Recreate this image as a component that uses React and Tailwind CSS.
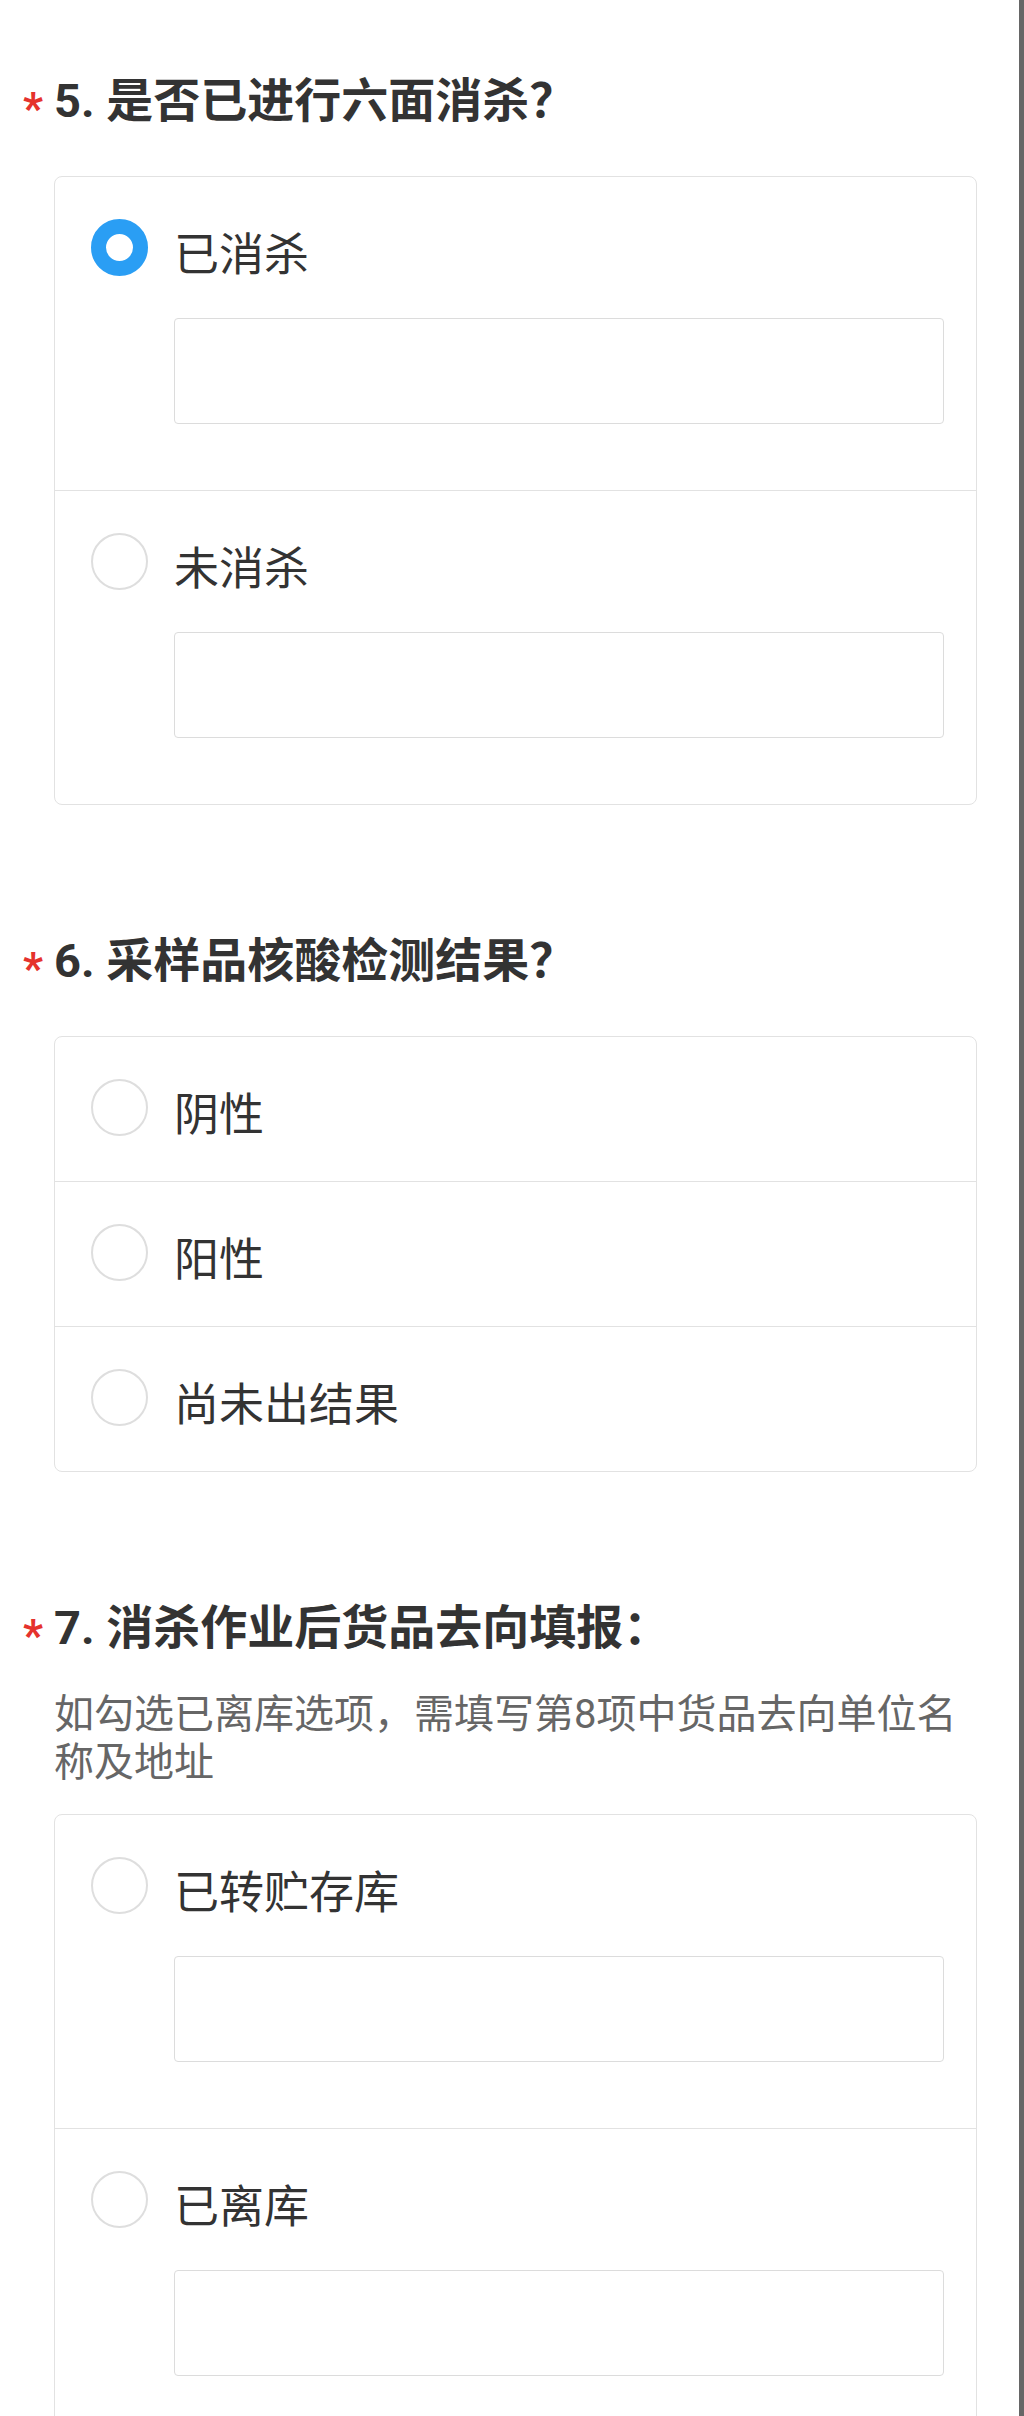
import React, { useState } from 'react';

const questions = [
  {
    id: 5,
    title: '是否已进行六面消杀？',
    options: [
      { label: '已消杀', input: true },
      { label: '未消杀', input: true }
    ],
    checked: 0
  },
  {
    id: 6,
    title: '采样品核酸检测结果？',
    options: [
      { label: '阴性' },
      { label: '阳性' },
      { label: '尚未出结果' }
    ]
  },
  {
    id: 7,
    title: '消杀作业后货品去向填报：',
    desc: '如勾选已离库选项，需填写第8项中货品去向单位名称及地址',
    options: [
      { label: '已转贮存库', input: true },
      { label: '已离库', input: true }
    ]
  }
];

function Radio({ checked }) {
  return checked ? (
    <span className="block w-[57px] h-[57px] shrink-0 rounded-full border-[15px] border-[#2a9ef4] bg-white" />
  ) : (
    <span className="block w-[57px] h-[57px] shrink-0 rounded-full border-2 border-[#dedede] bg-white" />
  );
}

function Question({ q }) {
  const [selected, setSelected] = useState(q.checked ?? -1);

  return (
    <section>
      <h2 className="flex items-center -ml-[31px] text-[47px] leading-[60px] font-bold text-[#333]">
        <span className="w-[31px] text-[44px] leading-none font-bold text-[#e5322d] translate-y-[8px]">*</span>
        <span>{q.id}. {q.title}</span>
      </h2>

      {q.desc && (
        <p className="mt-[33px] text-[40px] leading-[48px] text-[#666]">{q.desc}</p>
      )}

      <div className={`${q.desc ? 'mt-[27px]' : 'mt-[45px]'} border border-[#e2e2e2] rounded-[8px] divide-y divide-[#e2e2e2] bg-white`}>
        {q.options.map((opt, idx) => (
          <div
            key={opt.label}
            onClick={() => setSelected(idx)}
            className={`pl-[36px] pr-[32px] pt-[42px] ${opt.input ? 'pb-[66px]' : 'pb-[45px]'}`}
          >
            <div className="flex items-start gap-[26px] h-[57px]">
              <Radio checked={selected === idx} />
              <span className="text-[45px] leading-[57px] translate-y-[8px] text-[#333]">{opt.label}</span>
            </div>
            {opt.input && (
              <div className="mt-[42px] ml-[83px] h-[106px] border border-[#dcdcdc] rounded-[4px] bg-white" />
            )}
          </div>
        ))}
      </div>
    </section>
  );
}

export default function App() {
  return (
    <div
      className="flex min-h-screen bg-white"
      style={{ fontFamily: 'Roboto, "Noto Sans CJK SC", sans-serif' }}
    >
      <div className="flex-1 pl-[54px] pr-[42px] pt-[71px] space-y-[126px]">
        {questions.map(q => (
          <Question key={q.id} q={q} />
        ))}
      </div>
      <div className="w-[5px] bg-[#666]" />
    </div>
  );
}
